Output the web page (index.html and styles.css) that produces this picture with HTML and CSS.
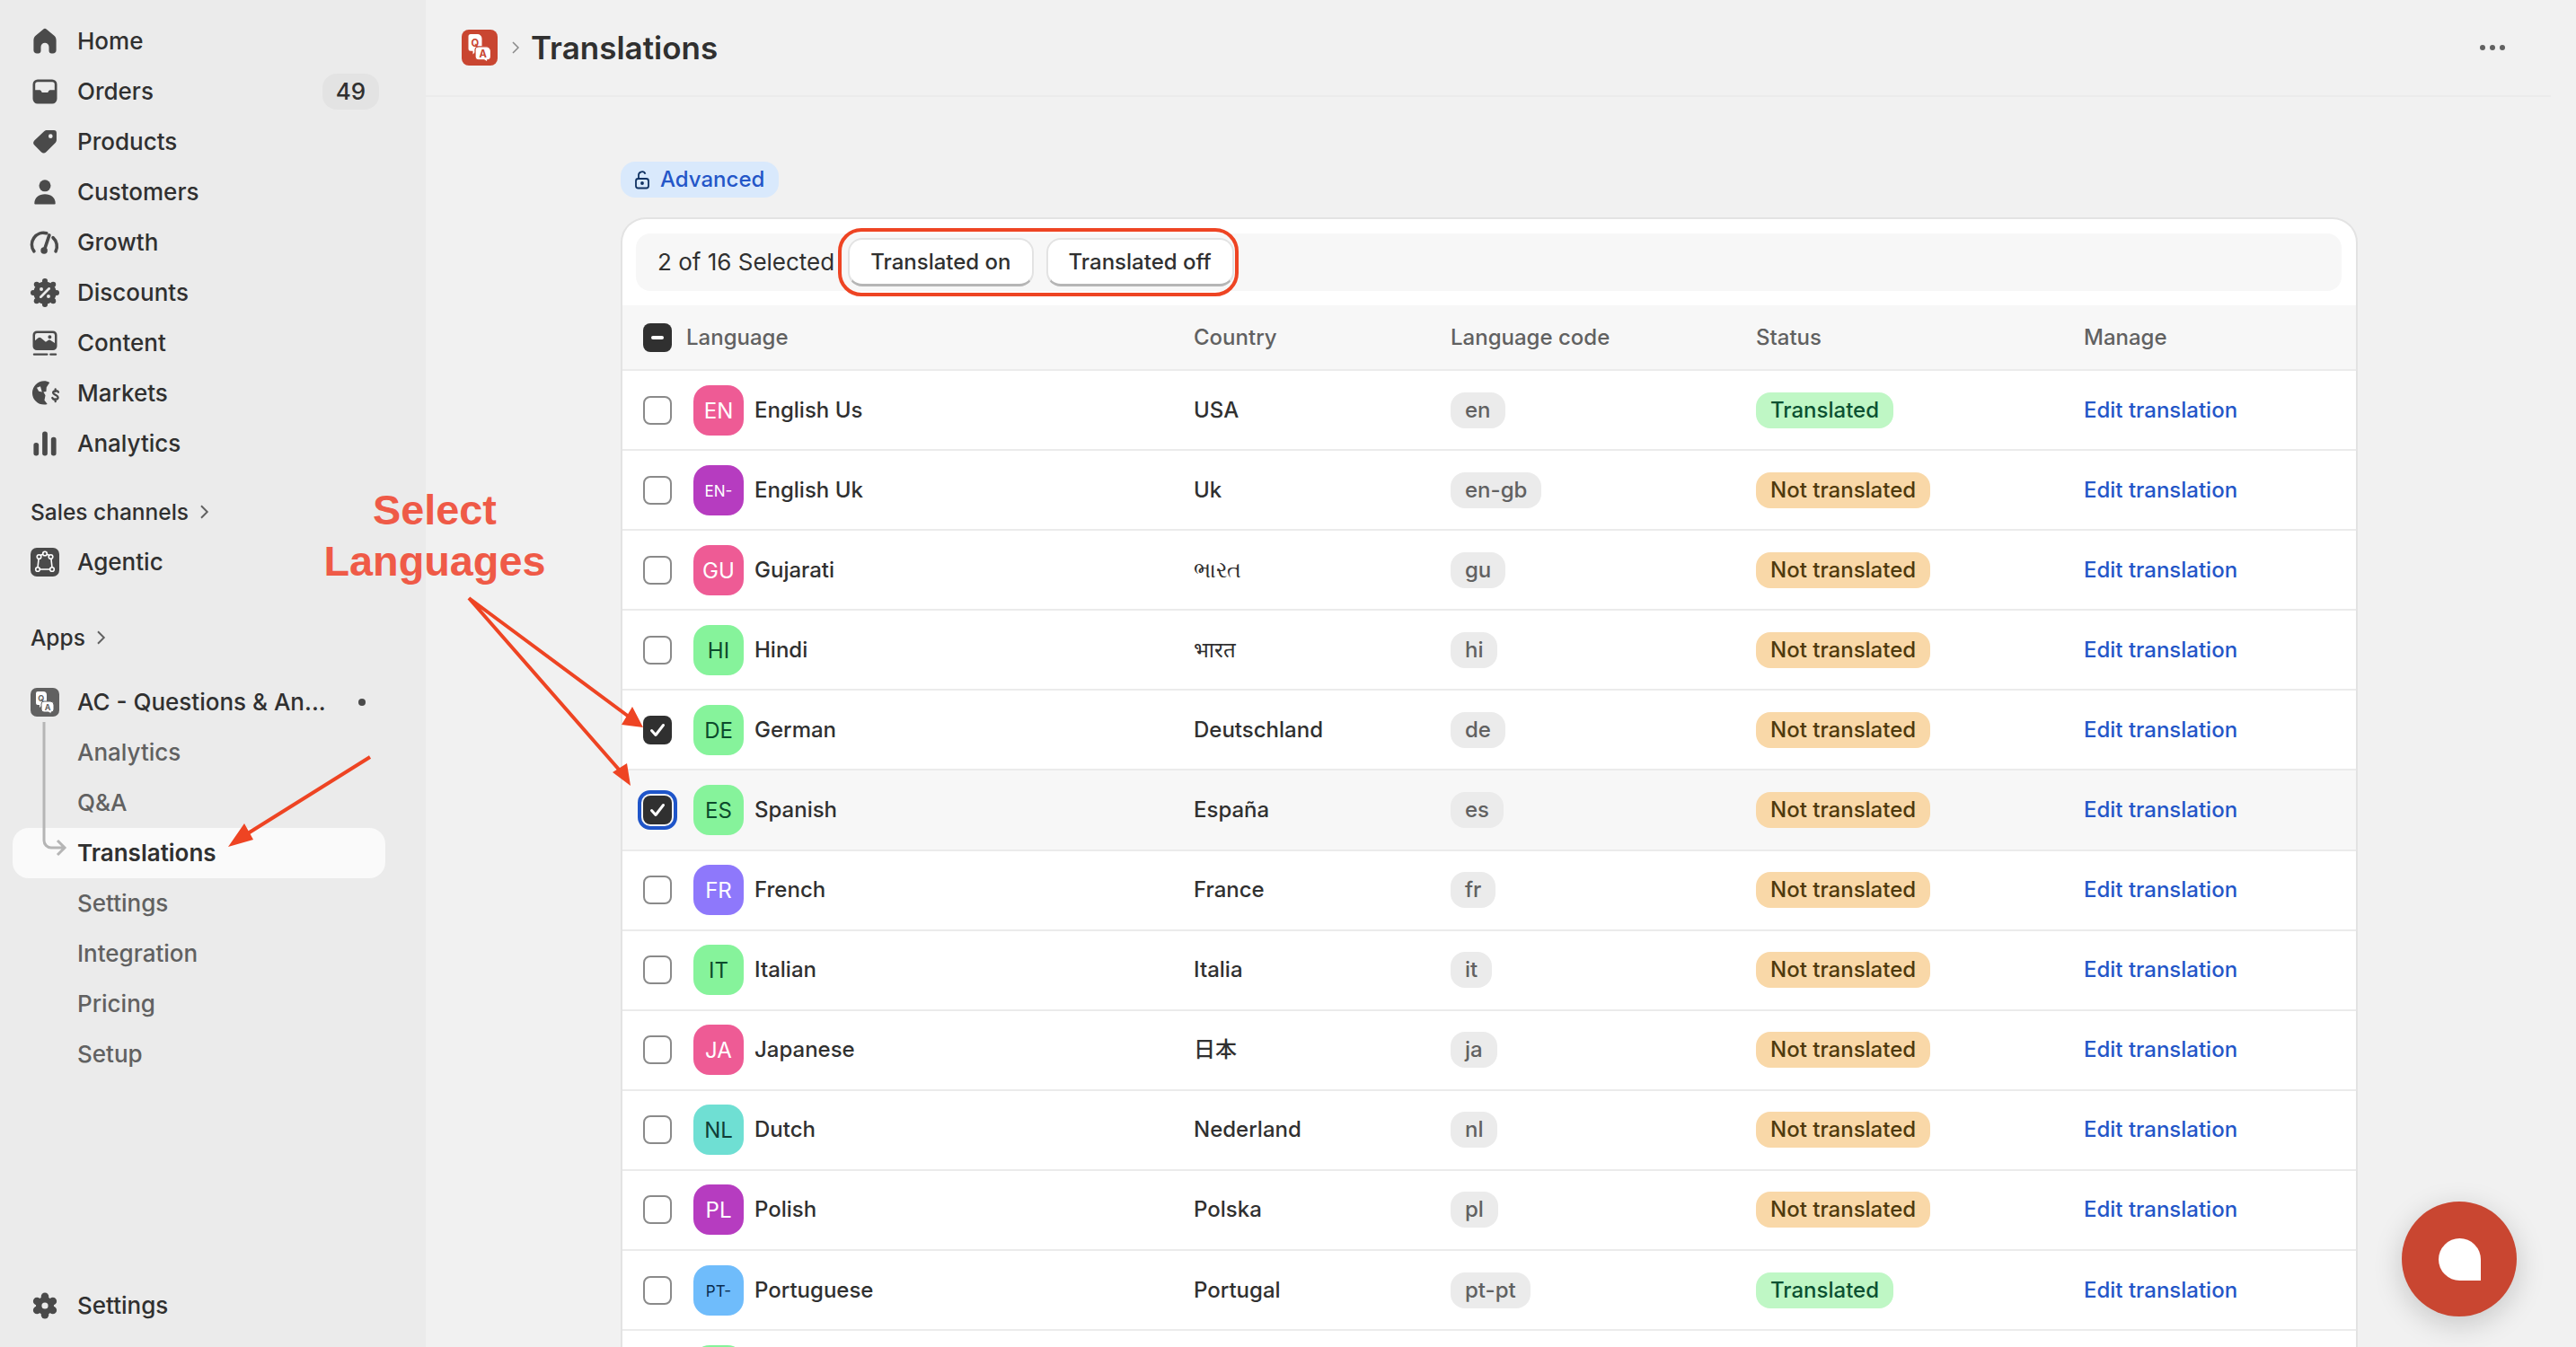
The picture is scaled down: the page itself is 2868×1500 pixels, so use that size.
FILE: index.html
```html
<!DOCTYPE html>
<html lang="en">
<head>
<meta charset="utf-8">
<title>Translations</title>
<link rel="stylesheet" href="styles.css">
</head>
<body>
<svg class="defs" width="0" height="0" aria-hidden="true">
  <defs>
    <symbol id="qa" viewBox="0 0 32 32">
      <path d="M8 4h6a4 4 0 0 1 4 4v7a4 4 0 0 1-4 4h-1l-3 3v-3H8a2 2 0 0 1-2-2V6a2 2 0 0 1 2-2z" fill="#fff"/>
      <path d="M15 15h7a4 4 0 0 1 4 4v5a3 3 0 0 1-3 3v2l-3-2h-5a3 3 0 0 1-3-3v-6a3 3 0 0 1 3-3z" fill="#fff" stroke="currentColor" stroke-width="1"/>
      <text x="11.800" y="15" class="qa-letter" fill="currentColor">Q</text>
      <text x="19" y="25" class="qa-letter" fill="currentColor">A</text>
    </symbol>
    <symbol id="tick" viewBox="0 0 32 32">
      <path d="M9.500 16.500l4.500 5 8.500-11" fill="none" stroke="#fff" stroke-width="3" stroke-linecap="round" stroke-linejoin="round"/>
    </symbol>
  </defs>
</svg>
<div class="app">
  <nav class="sidebar">
    <ul class="nav">
      <li class="nav-item"><svg class="nav-icon" viewBox="0 0 20 20"><path d="M8.900 2.600a1.700 1.700 0 0 1 2.200 0l4.500 3.800c.9.700 1.400 1.800 1.400 3v6.100c0 1.100-.9 2-2 2h-1c-.8 0-1.500-.7-1.500-1.500v-2.500a2.500 2.500 0 0 0-5 0V16c0 .8-.7 1.500-1.500 1.500H5c-1.100 0-2-.9-2-2V9.400c0-1.200.5-2.300 1.400-3z"/></svg>Home</li>
      <li class="nav-item"><svg class="nav-icon" viewBox="0 0 20 20"><path fill-rule="evenodd" d="M5.500 2.500h9a3 3 0 0 1 3 3v9a3 3 0 0 1-3 3h-9a3 3 0 0 1-3-3v-9a3 3 0 0 1 3-3zM5.500 4A1.500 1.500 0 0 0 4 5.500V9h2.500c.6 0 1.100.3 1.300.8l.4.7h3.600l.4-.7c.2-.5.700-.8 1.300-.8H16V5.500A1.500 1.500 0 0 0 14.500 4z"/></svg>Orders<span class="count">49</span></li>
      <li class="nav-item"><svg class="nav-icon" viewBox="0 0 20 20"><path fill-rule="evenodd" d="M11.300 2.800h4.200a1.700 1.700 0 0 1 1.700 1.700v4.200c0 .7-.3 1.300-.7 1.800l-5.700 5.700a2.200 2.200 0 0 1-3.100 0l-4.100-4.100a2.200 2.200 0 0 1 0-3.100l5.900-5.500c.5-.4 1.100-.7 1.800-.7zM13.500 5.200a1.300 1.300 0 1 0 0 2.600 1.300 1.300 0 0 0 0-2.600z"/></svg>Products</li>
      <li class="nav-item"><svg class="nav-icon" viewBox="0 0 20 20"><circle cx="10" cy="6" r="3.600"/><path d="M3.500 17c0-3.500 2.700-5.700 6.500-5.700s6.500 2.200 6.500 5.700c0 .3-.2.500-.5.500H4c-.3 0-.5-.2-.5-.5z"/></svg>Customers</li>
      <li class="nav-item"><svg class="nav-icon" viewBox="0 0 20 20"><path d="M3.300 15.500A7.200 7.200 0 0 1 11 4.300M15 7a7.200 7.200 0 0 1 1.700 8.500" fill="none" stroke="currentColor" stroke-width="2" stroke-linecap="round"/><path d="M9.700 14.500l3-9" stroke="currentColor" stroke-width="2" stroke-linecap="round"/><circle cx="9.500" cy="15" r="2.100"/></svg>Growth</li>
      <li class="nav-item"><svg class="nav-icon" viewBox="0 0 20 20"><circle cx="10" cy="10" r="7"/><circle cx="10" cy="2.800" r="1.700"/><circle cx="10" cy="17.200" r="1.700"/><circle cx="2.800" cy="10" r="1.700"/><circle cx="17.200" cy="10" r="1.700"/><circle cx="4.900" cy="4.900" r="1.700"/><circle cx="15.100" cy="4.900" r="1.700"/><circle cx="4.900" cy="15.100" r="1.700"/><circle cx="15.100" cy="15.100" r="1.700"/><path d="M12.600 7.400l-5.200 5.200" stroke="#ebebeb" stroke-width="1.500" stroke-linecap="round"/><circle cx="7.800" cy="7.800" r="1.100" fill="#ebebeb"/><circle cx="12.200" cy="12.200" r="1.100" fill="#ebebeb"/></svg>Discounts</li>
      <li class="nav-item"><svg class="nav-icon" viewBox="0 0 20 20"><path fill-rule="evenodd" d="M5 2.500h10A2.500 2.500 0 0 1 17.500 5v7a2.500 2.500 0 0 1-2.500 2.500H5A2.500 2.500 0 0 1 2.500 12V5A2.500 2.500 0 0 1 5 2.500zM5.200 3.900A1.300 1.300 0 0 0 3.900 5.200v3.300l2-1.700c.5-.4 1.100-.4 1.600 0l3 2.500 1.500-1c.5-.3 1-.3 1.500 0l2.600 1.700V5.200a1.300 1.300 0 0 0-1.300-1.300zM13 5.200a1.100 1.100 0 1 1 0 2.200 1.100 1.100 0 0 1 0-2.200z"/><path d="M3.300 17h8M13.500 17h3.200" stroke="currentColor" stroke-width="1.300" stroke-linecap="round"/></svg>Content</li>
      <li class="nav-item"><svg class="nav-icon" viewBox="0 0 20 20"><path d="M9.500 2.400c1.200 0 2.400.3 3.400.9l-1.900 2.900-.2 2.700-1.700.2 1.200 2.200-.6 3 1.800 2.400c-.6.200-1.300.3-2 .3a7.300 7.300 0 0 1 0-14.600zM5 6.500l1.200 2.300 2 .3-1-3.400z"/><path d="M18.300 9.200c-.3-1-2.800-1.200-3.200.2-.4 1.500 3.200 1.600 3 3.300-.2 1.500-3 1.400-3.500.1M16.500 7.500v1.300M16.500 13.500v1.500" fill="none" stroke="currentColor" stroke-width="1.300" stroke-linecap="round"/></svg>Markets</li>
      <li class="nav-item"><svg class="nav-icon" viewBox="0 0 20 20"><rect x="3" y="9.500" width="3.200" height="8" rx="1.500"/><rect x="8.400" y="2.500" width="3.200" height="15" rx="1.500"/><rect x="13.800" y="6" width="3.200" height="11.500" rx="1.500"/></svg>Analytics</li>
    </ul>

    <div class="nav-heading heading-sales">Sales channels<svg class="chev" viewBox="0 0 16 16"><path d="M6 3.500L10.500 8 6 12.500"/></svg></div>
    <div class="nav-item app-row"><span class="app-icon icon-dark"><svg viewBox="0 0 32 32" class="app-glyph"><path d="M10 9l4-2h4l4 2 1 4 1 9-3 2H11l-3-2 1-9z" fill="none" stroke="#fff" stroke-width="1.600"/><g fill="#4a4a4a" stroke="#fff" stroke-width="1.600"><circle cx="16" cy="6.500" r="2.300"/><circle cx="9.500" cy="10" r="2.300"/><circle cx="22.500" cy="10" r="2.300"/><circle cx="8" cy="24" r="2.300"/><circle cx="24" cy="24" r="2.300"/></g></svg></span>Agentic</div>

    <div class="nav-heading heading-apps">Apps<svg class="chev" viewBox="0 0 16 16"><path d="M6 3.500L10.500 8 6 12.500"/></svg></div>

    <div class="app-tree">
      <div class="nav-item app-row app-title"><span class="app-icon icon-grey"><svg class="app-glyph"><use href="#qa"/></svg></span><span class="app-name">AC - Questions &amp; An...</span><span class="dot"></span></div>
      <svg class="tree-line" viewBox="0 0 40 160"><path d="M5 2v132a8 8 0 0 0 8 8h14M20 134l8 8-8 8"/></svg>
      <ul class="subnav">
        <li class="sub-item">Analytics</li>
        <li class="sub-item">Q&amp;A</li>
        <li class="sub-item is-current">Translations</li>
        <li class="sub-item">Settings</li>
        <li class="sub-item">Integration</li>
        <li class="sub-item">Pricing</li>
        <li class="sub-item">Setup</li>
      </ul>
    </div>

    <div class="nav-item nav-bottom"><svg class="nav-icon" viewBox="0 0 20 20"><circle cx="10" cy="10" r="5.600"/><circle cx="10" cy="4.400" r="2.400"/><circle cx="10" cy="15.600" r="2.400"/><circle cx="5.100" cy="7.200" r="2.400"/><circle cx="14.900" cy="7.200" r="2.400"/><circle cx="5.100" cy="12.800" r="2.400"/><circle cx="14.900" cy="12.800" r="2.400"/><circle cx="10" cy="10" r="2" fill="#ebebeb"/></svg>Settings</div>
  </nav>

  <main class="main">
    <header class="topbar">
      <span class="title-icon"><svg class="title-glyph"><use href="#qa"/></svg></span>
      <svg class="title-chev" viewBox="0 0 16 24"><path d="M5 6l6 6-6 6"/></svg>
      <h1 class="title">Translations</h1>
      <span class="more"><i></i><i></i><i></i></span>
    </header>

    <section class="content">
      <div class="plan-badge"><svg class="lock" viewBox="0 0 20 22"><path d="M6 10V6a3.800 3.800 0 0 1 7.400-1.200"/><rect x="3" y="10" width="14" height="10.500" rx="2.500"/><circle cx="10" cy="15" r="1" class="lock-dot"/></svg>Advanced</div>

      <div class="card">
        <div class="bulk">
          <span class="bulk-count">2 of 16 Selected</span>
          <button class="btn">Translated on</button>
          <button class="btn">Translated off</button>
        </div>

        <div class="row row-head">
          <div class="lang"><span class="check is-on"><span class="minus"></span></span><span class="head-lang">Language</span></div>
          <div>Country</div>
          <div>Language code</div>
          <div>Status</div>
          <div>Manage</div>
        </div>

        <div class="row"><div class="lang"><span class="check"></span><span class="avatar pink">EN</span>English Us</div><div>USA</div><div><span class="code">en</span></div><div><span class="status done">Translated</span></div><div><a class="link">Edit translation</a></div></div>
        <div class="row"><div class="lang"><span class="check"></span><span class="avatar purple small">EN-</span>English Uk</div><div>Uk</div><div><span class="code">en-gb</span></div><div><span class="status todo">Not translated</span></div><div><a class="link">Edit translation</a></div></div>
        <div class="row"><div class="lang"><span class="check"></span><span class="avatar pink">GU</span>Gujarati</div><div>ભારત</div><div><span class="code">gu</span></div><div><span class="status todo">Not translated</span></div><div><a class="link">Edit translation</a></div></div>
        <div class="row"><div class="lang"><span class="check"></span><span class="avatar green">HI</span>Hindi</div><div>भारत</div><div><span class="code">hi</span></div><div><span class="status todo">Not translated</span></div><div><a class="link">Edit translation</a></div></div>
        <div class="row"><div class="lang"><span class="check is-on"><svg class="tick"><use href="#tick"/></svg></span><span class="avatar green">DE</span>German</div><div>Deutschland</div><div><span class="code">de</span></div><div><span class="status todo">Not translated</span></div><div><a class="link">Edit translation</a></div></div>
        <div class="row is-hover"><div class="lang"><span class="check is-on is-focus"><svg class="tick"><use href="#tick"/></svg></span><span class="avatar green">ES</span>Spanish</div><div>España</div><div><span class="code">es</span></div><div><span class="status todo">Not translated</span></div><div><a class="link">Edit translation</a></div></div>
        <div class="row"><div class="lang"><span class="check"></span><span class="avatar violet">FR</span>French</div><div>France</div><div><span class="code">fr</span></div><div><span class="status todo">Not translated</span></div><div><a class="link">Edit translation</a></div></div>
        <div class="row"><div class="lang"><span class="check"></span><span class="avatar green">IT</span>Italian</div><div>Italia</div><div><span class="code">it</span></div><div><span class="status todo">Not translated</span></div><div><a class="link">Edit translation</a></div></div>
        <div class="row"><div class="lang"><span class="check"></span><span class="avatar pink">JA</span>Japanese</div><div>日本</div><div><span class="code">ja</span></div><div><span class="status todo">Not translated</span></div><div><a class="link">Edit translation</a></div></div>
        <div class="row"><div class="lang"><span class="check"></span><span class="avatar teal">NL</span>Dutch</div><div>Nederland</div><div><span class="code">nl</span></div><div><span class="status todo">Not translated</span></div><div><a class="link">Edit translation</a></div></div>
        <div class="row"><div class="lang"><span class="check"></span><span class="avatar purple">PL</span>Polish</div><div>Polska</div><div><span class="code">pl</span></div><div><span class="status todo">Not translated</span></div><div><a class="link">Edit translation</a></div></div>
        <div class="row"><div class="lang"><span class="check"></span><span class="avatar blue small">PT-</span>Portuguese</div><div>Portugal</div><div><span class="code">pt-pt</span></div><div><span class="status done">Translated</span></div><div><a class="link">Edit translation</a></div></div>
        <div class="row"><div class="lang"><span class="check"></span><span class="avatar green"></span></div></div>
      </div>
    </section>
  </main>
</div>

<svg class="annotations" viewBox="0 0 2868 1500" aria-hidden="true">
  <rect class="ann-box" x="935" y="256" width="442" height="72" rx="24"/>
  <path class="ann-line" d="M522 666L700 798M522 666L690 858M412 843L268 933"/>
  <path class="ann-head" d="M716 810L692 807L704 787zM702 875L682 860L698 850zM254 943L272 917L282 935z"/>
</svg>
<div class="ann-text">Select<br>Languages</div>
<div class="chat"><span class="chat-bubble"></span></div>
</body>
</html>
```

FILE: styles.css
```css
* { box-sizing: border-box; }

html, body {
  margin: 0;
  height: 1500px;
  overflow: hidden;
}

body {
  position: relative;
  background: #f1f1f1;
  color: #303030;
  font-family: Inter, "Noto Sans", "Noto Sans CJK JP", sans-serif;
  font-size: 24px;
  font-weight: 450;
  line-height: 40px;
}

.defs { position: absolute; }

.qa-letter {
  font-family: Inter, sans-serif;
  font-size: 9px;
  font-weight: 700;
  text-anchor: middle;
}

.app {
  display: flex;
  height: 1500px;
}

/* Sidebar */
.sidebar {
  flex: 0 0 474px;
  display: flex;
  flex-direction: column;
  padding: 18px 0;
  background: #ebebeb;
  font-size: 26px;
  font-weight: 500;
}

.nav, .subnav {
  margin: 0;
  padding: 0;
  list-style: none;
}

.nav-item {
  display: flex;
  align-items: center;
  height: 56px;
  padding-left: 32px;
  color: #303030;
}

.nav-icon {
  flex: none;
  width: 36px;
  height: 36px;
  margin-right: 18px;
  fill: #4a4a4a;
  color: #4a4a4a;
}

.count {
  width: 63px;
  height: 40px;
  margin-left: auto;
  margin-right: 52px;
  border-radius: 16px;
  background: #e3e3e3;
  text-align: center;
}

.nav-heading {
  display: flex;
  align-items: center;
  height: 56px;
  padding-left: 34px;
  font-size: 24.500px;
}

.heading-sales { margin-top: 20px; }
.heading-apps { margin-top: 28px; }

.chev {
  width: 24px;
  height: 24px;
  margin-left: 5px;
  fill: none;
  stroke: #616161;
  stroke-width: 1.300;
}

.app-row { padding-left: 34px; }

.app-icon {
  flex: none;
  width: 32px;
  height: 32px;
  margin-right: 20px;
  border-radius: 7px;
}

.icon-dark { background: #4a4a4a; }
.icon-grey { background: #616161; color: #616161; }

.app-glyph {
  display: block;
  width: 32px;
  height: 32px;
}

.app-tree {
  position: relative;
  margin-top: 16px;
}

.app-name { white-space: nowrap; }

.dot {
  width: 8px;
  height: 8px;
  margin-left: 36px;
  border-radius: 50%;
  background: #4a4a4a;
}

.tree-line {
  position: absolute;
  z-index: 1;
  left: 44px;
  top: 48px;
  width: 40px;
  height: 160px;
  fill: none;
  stroke: #b5b5b5;
  stroke-width: 3;
}

.sub-item {
  display: flex;
  align-items: center;
  height: 56px;
  margin: 0 45px 0 14px;
  padding-left: 72px;
  border-radius: 18px;
  color: #616161;
}

.is-current {
  background: #fafafa;
  color: #303030;
  font-weight: 600;
}

.nav-bottom { margin-top: auto; }

/* Main */
.main {
  flex: 1;
  min-width: 0;
  overflow: hidden;
}

.topbar {
  display: flex;
  align-items: center;
  height: 108px;
  margin-right: 28px;
  padding: 0 0 0 40px;
  border-bottom: 2px solid #ebebeb;
}

.title-icon {
  flex: none;
  width: 40px;
  height: 40px;
  border-radius: 8px;
  background: #c94631;
  color: #c94631;
}

.title-glyph {
  display: block;
  width: 40px;
  height: 40px;
}

.title-chev {
  flex: none;
  width: 16px;
  height: 24px;
  margin: 0 9px 0 12px;
  fill: none;
  stroke: #8a8a8a;
  stroke-width: 1.500;
}

.title {
  margin: 0;
  font-size: 35px;
  font-weight: 600;
  line-height: 48px;
}

.more {
  display: flex;
  gap: 5px;
  margin-left: auto;
  margin-right: 51px;
}

.more i {
  width: 6px;
  height: 6px;
  border-radius: 50%;
  background: #616161;
}

.content {
  width: 1934px;
  margin-left: 217px;
  padding-top: 72px;
}

.plan-badge {
  display: flex;
  align-items: center;
  gap: 10px;
  width: 176px;
  height: 40px;
  padding-left: 14px;
  border-radius: 16px;
  background: #d9e9fc;
  color: #2456c8;
  font-size: 24px;
}

.lock {
  flex: none;
  width: 20px;
  height: 22px;
  fill: none;
  stroke: #103262;
  stroke-width: 1.800;
}

.lock-dot { fill: #103262; }

.card {
  margin-top: 22px;
  padding-top: 16px;
  border: 2px solid #e3e3e3;
  border-bottom: 0;
  border-radius: 28px 28px 0 0;
  background: #fff;
}

.bulk {
  display: flex;
  align-items: center;
  height: 64px;
  margin: 0 16px 16px 15px;
  padding-left: 24px;
  border-radius: 16px;
  background: #f7f7f7;
  font-size: 26px;
  font-weight: 400;
}

.bulk-count { margin-right: 15px; }

.btn {
  height: 54px;
  margin-right: 14px;
  padding: 0 23px;
  border: 2px solid #e3e3e3;
  border-bottom: 3px solid #b5b5b5;
  border-radius: 16px;
  background: #fff;
  color: #303030;
  font: inherit;
  font-size: 24px;
  font-weight: 500;
}

.row {
  display: grid;
  grid-template-columns: 636px 286px 340px 365px 1fr;
  align-items: center;
  height: 89.100px;
  border-bottom: 2px solid #ebebeb;
}

.row-head {
  height: 73px;
  background: #f7f7f7;
  color: #616161;
  font-weight: 500;
}

.is-hover { background: #f7f7f7; }

.lang {
  display: flex;
  align-items: center;
  padding-left: 23px;
}

.head-lang { margin-left: 16px; }

.check {
  position: relative;
  flex: none;
  display: flex;
  align-items: center;
  justify-content: center;
  width: 32px;
  height: 32px;
  border: 2px solid #8a8a8a;
  border-radius: 8px;
  background: #fff;
}

.check.is-on {
  border: 0;
  background: #303030;
}

.is-focus {
  outline: 4px solid #1f55c9;
  outline-offset: 2px;
}

.tick {
  width: 32px;
  height: 32px;
}

.minus {
  width: 14px;
  height: 4px;
  border-radius: 2px;
  background: #fff;
}

.avatar {
  flex: none;
  display: flex;
  align-items: center;
  justify-content: center;
  width: 56px;
  height: 56px;
  margin: 0 12px 0 24px;
  padding-top: 2px;
  border-radius: 18px;
  font-size: 24px;
  font-weight: 400;
}

.small { font-size: 17px; }

.pink { background: #ee5b95; color: #fff; }
.purple { background: #b63cc0; color: #fff; }
.violet { background: #8e78fb; color: #fff; }
.green { background: #86f39b; color: #0c4a2c; }
.teal { background: #6fdfd3; color: #103e38; }
.blue { background: #6fbcfb; color: #0a2c4f; }

.code {
  display: inline-block;
  height: 40px;
  padding: 0 16px;
  border-radius: 16px;
  background: #ebebeb;
  color: #616161;
}

.status {
  display: inline-block;
  height: 40px;
  padding: 0 16px;
  border-radius: 16px;
  font-weight: 500;
}

.done { background: #bff7c5; color: #0c5132; }
.todo { background: #f9d8a8; color: #4f3a0d; }

.link { color: #2456c8; }

/* Overlays */
.annotations {
  position: absolute;
  left: 0;
  top: 0;
  width: 2868px;
  height: 1500px;
  pointer-events: none;
}

.ann-box {
  fill: none;
  stroke: #ee4423;
  stroke-width: 4;
}

.ann-line {
  fill: none;
  stroke: #ee4423;
  stroke-width: 4;
}

.ann-head { fill: #ee4423; }

.ann-text {
  position: absolute;
  left: 334px;
  top: 540px;
  width: 300px;
  color: #ef5a47;
  font-family: "Liberation Sans", Arial, sans-serif;
  font-size: 46.800px;
  font-weight: 700;
  line-height: 57px;
  text-align: center;
}

.chat {
  position: absolute;
  left: 2674px;
  top: 1338px;
  display: flex;
  align-items: center;
  justify-content: center;
  width: 128px;
  height: 128px;
  border-radius: 50%;
  background: #c94631;
  box-shadow: 0 8px 32px rgba(0, 0, 0, .18);
}

.chat-bubble {
  width: 47px;
  height: 47px;
  border-radius: 50% 50% 0 50%;
  background: #fff;
}
```
